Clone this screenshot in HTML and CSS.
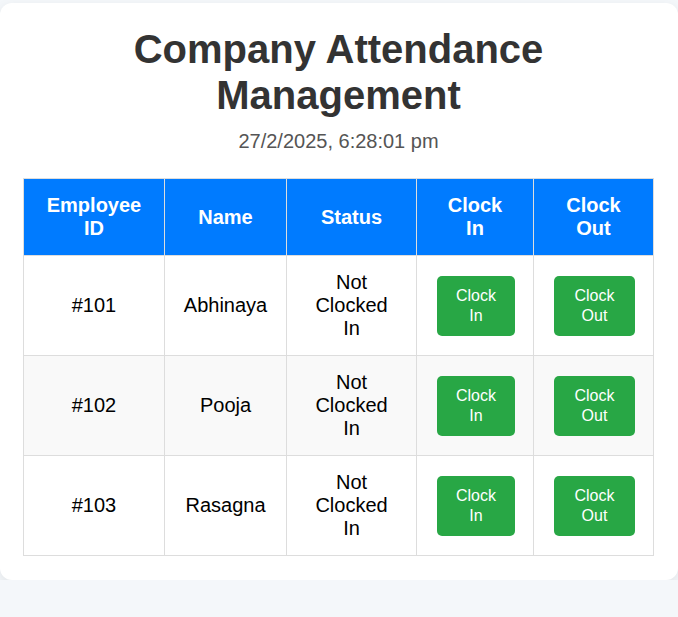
FILE: index.html
```html
<!DOCTYPE html>
<html>
<head>
<meta charset="utf-8">
<link rel="stylesheet" href="styles.css">
</head>
<body>
<div class="card">
  <h1 class="title">Company Attendance Management</h1>
  <p class="clock">27/2/2025, 6:28:01 pm</p>
  <table class="grid">
    <colgroup>
      <col class="c1"><col class="c2"><col class="c3"><col class="c4"><col class="c5">
    </colgroup>
    <thead>
      <tr><th><span class="stack">Employee ID</span></th><th>Name</th><th>Status</th><th><span class="stack">Clock In</span></th><th><span class="stack">Clock Out</span></th></tr>
    </thead>
    <tbody>
      <tr><td>#101</td><td>Abhinaya</td><td><span class="stack">Not Clocked In</span></td><td><button class="btn"><span class="stack">Clock In</span></button></td><td><button class="btn"><span class="stack">Clock Out</span></button></td></tr>
      <tr><td>#102</td><td>Pooja</td><td><span class="stack">Not Clocked In</span></td><td><button class="btn"><span class="stack">Clock In</span></button></td><td><button class="btn"><span class="stack">Clock Out</span></button></td></tr>
      <tr><td>#103</td><td>Rasagna</td><td><span class="stack">Not Clocked In</span></td><td><button class="btn"><span class="stack">Clock In</span></button></td><td><button class="btn"><span class="stack">Clock Out</span></button></td></tr>
    </tbody>
  </table>
</div>
</body>
</html>
```
FILE: styles.css
```css
html, body {
  margin: 0;
  padding: 0;
}
body {
  background: #f4f7fa;
  font-family: "Liberation Sans", Arial, sans-serif;
  padding-top: 3px;
}
.card {
  background: #fff;
  border-radius: 12px;
  box-shadow: 0 4px 12px rgba(0, 0, 0, 0.08);
  padding: 23px 24px 24px 23px;
  text-align: center;
}
.title {
  margin: 0;
  font-size: 40px;
  line-height: 46px;
  font-weight: bold;
  color: #333;
}
.clock {
  margin: 12px 0 25px;
  font-size: 20px;
  line-height: 23px;
  color: #555;
}
.grid {
  width: 100%;
  border-collapse: collapse;
  table-layout: fixed;
}
.c1 { width: 141px; }
.c2 { width: 122px; }
.c3 { width: 130px; }
.c4 { width: 117px; }
.c5 { width: 120px; }
.grid th, .grid td {
  border: 1px solid #ddd;
  padding: 15px;
  font-size: 20px;
  line-height: 23px;
  text-align: center;
  vertical-align: middle;
}
.grid th {
  background: #007bff;
  color: #fff;
  font-weight: bold;
}
.grid td {
  color: #000;
}
.grid tbody tr:nth-child(even) td {
  background: #f9f9f9;
}
.stack {
  display: inline-block;
  width: min-content;
}
.btn {
  display: block;
  width: calc(100% - 8px);
  margin: 0 4px 0 5px;
  padding: 10px 0;
  border: none;
  border-radius: 5px;
  background: #28a745;
  color: #fff;
  font-family: "Liberation Sans", Arial, sans-serif;
  font-size: 16px;
  line-height: 20px;
  cursor: pointer;
}
```
